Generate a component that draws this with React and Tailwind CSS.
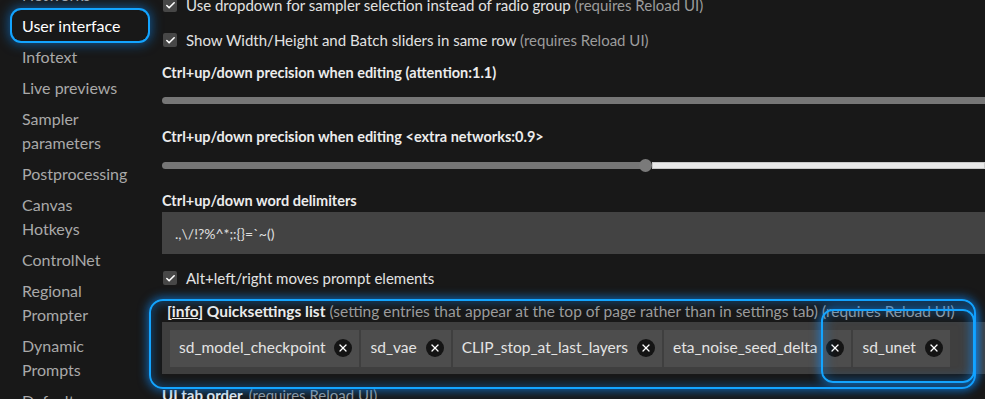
import { X, Check } from "lucide-react";

const sections = [
  { lines: ["Networks"] },
  { lines: ["User interface"], active: true },
  { lines: ["Infotext"] },
  { lines: ["Live previews"] },
  { lines: ["Sampler", "parameters"] },
  { lines: ["Postprocessing"] },
  { lines: ["Canvas", "Hotkeys"] },
  { lines: ["ControlNet"] },
  { lines: ["Regional", "Prompter"] },
  { lines: ["Dynamic", "Prompts"] },
  { lines: ["Defaults"] },
];

const quicksettings = [
  "sd_model_checkpoint",
  "sd_vae",
  "CLIP_stop_at_last_layers",
  "eta_noise_seed_delta",
  "sd_unet",
];

function CheckRow({ text, note, className }) {
  return (
    <div className={"flex items-center gap-[9px] " + className}>
      <span className="flex h-[14px] w-[14px] shrink-0 items-center justify-center rounded-[2px] bg-[#474747] ml-[1px]">
        <Check size={11} strokeWidth={3.5} className="text-white" />
      </span>
      <span className="whitespace-nowrap text-[#e2e2e2]">
        {text}
        {note && <span className="text-[#9c9c9c]"> {note}</span>}
      </span>
    </div>
  );
}

function Label({ children, className }) {
  return (
    <div className={"flex items-center whitespace-nowrap text-[14.5px] font-bold text-[#ececec] " + className}>
      {children}
    </div>
  );
}

export default function App() {
  return (
    <div
      className="relative flex h-[399px] w-[985px] items-start overflow-hidden bg-[#181818] text-[15px]"
      style={{ fontFamily: "Lato, 'Liberation Sans', sans-serif" }}
    >
      {/* SIDEBAR */}
      <div className="flex w-[148px] shrink-0 flex-col pl-[12px] -mt-[21px] text-[16px] leading-[24px]">
        {sections.map((s) => (
          <div
            key={s.lines[0]}
            className={
              "w-[136px] px-[10px] py-[3.5px] " +
              (s.active
                ? "rounded-[9px] text-white ring-2 ring-[#13a4ff] shadow-[0_0_12px_3px_rgba(10,140,255,0.55)]"
                : "text-[#a9a9a9]")
            }
          >
            {s.lines.map((l) => (
              <div key={l} className="whitespace-nowrap">{l}</div>
            ))}
          </div>
        ))}
      </div>

      {/* MAIN SETTINGS */}
      <div className="ml-[14px] flex min-w-0 flex-1 flex-col -mt-[13px]">
        <CheckRow
          className="h-[36px]"
          text="Use dropdown for sampler selection instead of radio group"
          note="(requires Reload UI)"
        />
        <CheckRow
          className="h-[34px]"
          text="Show Width/Height and Batch sliders in same row"
          note="(requires Reload UI)"
        />

        <Label className="mt-[4px] h-[24px]">Ctrl+up/down precision when editing (attention:1.1)</Label>
        <div className="mt-[12px] h-[7px] w-full rounded-l-full bg-[#767676]" />

        <Label className="mt-[21px] h-[24px]">{"Ctrl+up/down precision when editing <extra networks:0.9>"}</Label>
        <div className="relative mt-[13px] flex h-[7px] w-full items-center">
          <div className="h-[7px] w-[483px] rounded-l-full bg-[#767676]" />
          <div className="h-[13px] w-[13px] shrink-0 -ml-[6px] rounded-full bg-[#7a7a7a]" />
          <div className="h-[7px] flex-1 border border-[#c8c8c8] bg-[#e8e8e8]" />
        </div>

        <Label className="mt-[21px] h-[22px]">Ctrl+up/down word delimiters</Label>
        <div className="flex h-[42px] w-full items-center bg-[#434343] px-[13px] text-[14px] text-[#e0e0e0]">
          {".,\\/!?%^*;:{}=`~()"}
        </div>

        <CheckRow className="mt-[12px] h-[24px]" text="Alt+left/right moves prompt elements" />

        {/* Quicksettings */}
        <div className="mt-[12px] flex h-[20px] items-center whitespace-nowrap pl-[5px] text-[15.5px]">
          <span className="font-bold text-[#ececec]">
            [<span className="underline">info</span>] Quicksettings list
          </span>
          <span className="ml-[4px] text-[#9c9c9c]">
            (setting entries that appear at the top of page rather than in settings tab) (requires Reload UI)
          </span>
        </div>
        <div className="flex h-[52px] w-full items-center gap-[2px] bg-[#3f3f3f] pl-[8px]">
          {quicksettings.map((q) => (
            <div
              key={q}
              className="flex h-[37px] shrink-0 items-center gap-[9px] bg-[#4d4d4d] pl-[9px] pr-[7px] text-[15.5px] text-[#e4e4e4]"
            >
              <span className="whitespace-nowrap">{q}</span>
              <span className="flex h-[18px] w-[18px] items-center justify-center rounded-full bg-[#141414]">
                <X size={12} strokeWidth={2.5} className="text-white" />
              </span>
            </div>
          ))}
        </div>

        <div className="mt-[10px] flex h-[22px] items-center whitespace-nowrap">
          <span className="font-bold text-[#ececec]">UI tab order</span>
          <span className="ml-[6px] text-[#9c9c9c]">(requires Reload UI)</span>
        </div>
      </div>

      {/* highlight overlays */}
      <div className="pointer-events-none absolute left-[149px] top-[299px] h-[90px] w-[827px] rounded-[14px] border-2 border-[#13a4ff] shadow-[0_0_10px_2px_rgba(10,140,255,0.6),inset_0_0_10px_2px_rgba(10,140,255,0.35)]" />
      <div className="pointer-events-none absolute left-[821px] top-[309px] h-[74px] w-[154px] rounded-[12px] border-2 border-[#13a4ff] shadow-[0_0_10px_2px_rgba(10,140,255,0.6),inset_0_0_12px_2px_rgba(10,140,255,0.35)]" />
    </div>
  );
}
